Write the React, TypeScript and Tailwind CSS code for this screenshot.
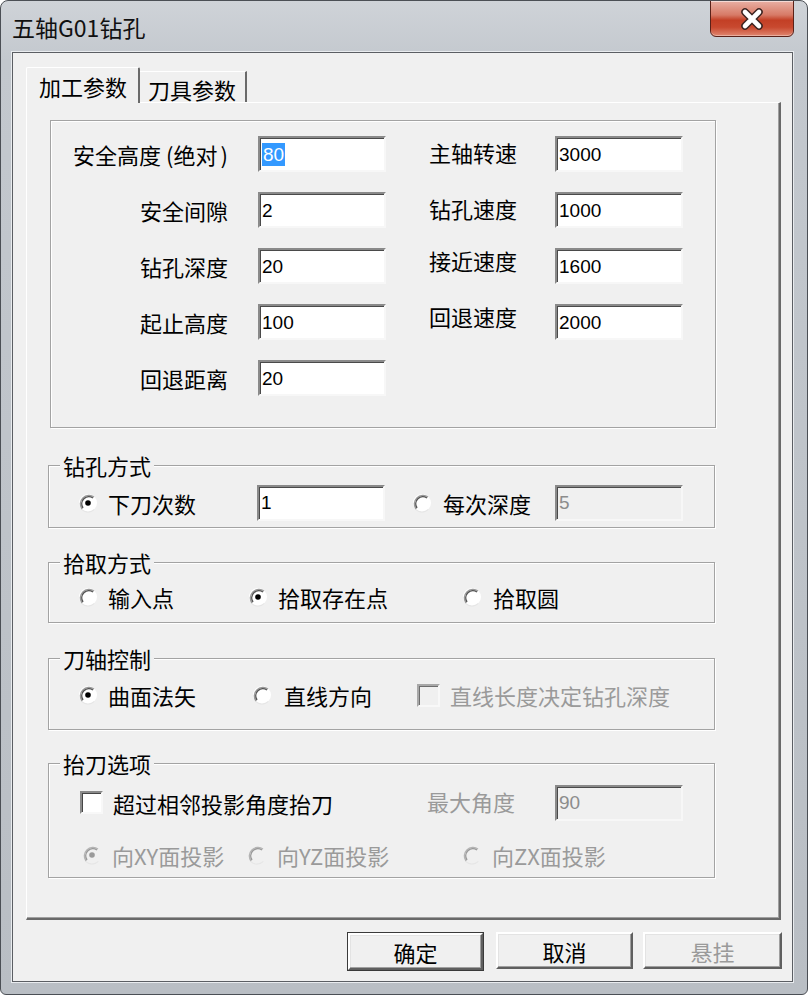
import React from 'react';

const CJK = "font-['Noto_Sans_CJK_SC',sans-serif]";

function Radio({ checked = false, disabled = false }: { checked?: boolean; disabled?: boolean }) {
  return (
    <svg width="20" height="20" viewBox="0 0 20 20" className="shrink-0">
      <circle cx="10" cy="10" r="9" fill={disabled ? '#f0f0f0' : '#ffffff'} />
      <path d="M16.4 16.4 A9 9 0 0 1 3.6 16.4" stroke="#e6e6e6" strokeWidth="1.2" fill="none" />
      <path d="M4 16 A8.6 8.6 0 0 1 16 4" stroke={disabled ? '#b4b4b4' : '#9a9a9a'} strokeWidth="1.4" fill="none" />
      <path d="M5 15 A7.2 7.2 0 0 1 15 5" stroke={disabled ? '#9a9a9a' : '#555555'} strokeWidth="1.4" fill="none" />
      {checked && <circle cx="10" cy="10" r="2.8" fill={disabled ? '#9a9a9a' : '#000000'} />}
    </svg>
  );
}

function Check({ disabled = false }: { disabled?: boolean }) {
  return (
    <div
      className={`w-[23px] h-[23px] shrink-0 border-2 border-r-[#f8f8f8] border-b-[#f8f8f8] ${
        disabled
          ? 'bg-[#f0f0f0] border-t-[#a8a8a8] border-l-[#a8a8a8] shadow-[inset_1px_1px_0_#6e6e6e]'
          : 'bg-white border-t-[#8a8a8a] border-l-[#8a8a8a] shadow-[inset_1px_1px_0_#454545]'
      }`}
    />
  );
}

function Field({ value, disabled = false, selected = false }: { value: string; disabled?: boolean; selected?: boolean }) {
  return (
    <div
      className={`w-[128px] h-[36px] shrink-0 border-2 border-t-[#8a8a8a] border-l-[#8a8a8a] border-r-[#f7f7f7] border-b-[#f7f7f7] shadow-[inset_1px_1px_0_#4a4a4a] flex items-center pl-[2px] text-[19px] leading-none font-['Liberation_Sans',sans-serif] ${
        disabled ? 'bg-[#f0f0f0] text-[#8c8c8c]' : 'bg-white text-black'
      }`}
    >
      {selected ? (
        <span className="bg-[#3399ff] text-white px-[1px] py-[2px]">{value}</span>
      ) : (
        <span>{value}</span>
      )}
    </div>
  );
}

function Group({ title, className, children }: { title?: string; className: string; children: React.ReactNode }) {
  return (
    <div className={`relative shrink-0 border border-[#a3a3a3] shadow-[inset_1px_1px_0_#ffffff,1px_1px_0_#ffffff] ${className}`}>
      {title && (
        <span className="absolute left-[11px] -top-[13px] bg-[#f0f0f0] px-[3px] text-[22px] leading-[24px] text-black">
          {title}
        </span>
      )}
      {children}
    </div>
  );
}

function ParamRow({
  l1,
  v1,
  l2,
  v2,
  sel,
  up,
}: {
  l1: React.ReactNode;
  v1: string;
  l2?: string;
  v2?: string;
  sel?: boolean;
  up?: boolean;
}) {
  return (
    <div className="flex items-center h-[36px]">
      <div className="w-[177px] text-right text-[22px] leading-[24px]">{l1}</div>
      <div className="ml-[30px]">
        <Field value={v1} selected={sel} />
      </div>
      {l2 && (
        <div className={`ml-[43px] w-[126px] text-[22px] leading-[24px] ${up ? '-mt-[12px]' : '-mt-[4px]'}`}>{l2}</div>
      )}
      {v2 && <Field value={v2} />}
    </div>
  );
}

function Btn({ label, disabled = false, className = '' }: { label: string; disabled?: boolean; className?: string }) {
  return (
    <div
      className={`h-[37px] shrink-0 flex items-center justify-center bg-[#f0f0f0] border-2 border-t-white border-l-white border-r-[#5f5f5f] border-b-[#5f5f5f] shadow-[inset_-1px_-1px_0_#a0a0a0,inset_1px_1px_0_#e3e3e3] text-[22px] leading-none ${
        disabled ? 'text-[#9a9a9a]' : 'text-black'
      } ${className}`}
    >
      {label}
    </div>
  );
}

export default function App() {
  return (
    <div className={`${CJK} w-[808px] h-[995px] flex flex-col overflow-hidden rounded-t-[8px] rounded-b-[6px] border border-[#4b4f55] bg-[linear-gradient(180deg,#cfd3d8_0%,#c3c8ce_6%,#b9bec4_100%)] text-black`}>
      {/* Title bar */}
      <div className="h-[51px] shrink-0 flex items-start justify-between">
        <div className="pl-[11px] pt-[12px] text-[23px] leading-[28px] text-[#111]">五轴G01钻孔</div>
        <div className="mr-[13px] -mt-px w-[84px] h-[37px] rounded-b-[6px] border border-[#5a2118] bg-[linear-gradient(180deg,#e9b0a4_0%,#d77a66_40%,#c33f25_55%,#c8492f_75%,#e0866f_100%)] shadow-[inset_0_1px_0_rgba(255,255,255,0.55),inset_0_-1px_0_rgba(255,255,255,0.35)] flex items-center justify-center">
          <svg width="26" height="24" viewBox="0 0 26 24">
            <path d="M6 5 L20 19 M20 5 L6 19" stroke="#3b2320" strokeWidth="7.5" strokeLinecap="round" />
            <path d="M6 5 L20 19 M20 5 L6 19" stroke="#ffffff" strokeWidth="4.6" strokeLinecap="round" />
          </svg>
        </div>
      </div>

      {/* Client area */}
      <div className="flex-1 flex pl-[11px] pr-[14px] pb-[14px]">
        <div className="flex-1 flex flex-col bg-[#f0f0f0] border border-[#5b5e63] shadow-[0_0_0_1px_#e9ecef] pt-[15px] pl-[13px] pr-[11px] pb-[10px]">
          {/* Tabs */}
          <div className="h-[34px] flex items-end text-[22px] leading-[24px] relative z-10">
            <div className="w-[114px] h-[36px] -mb-[1px] bg-[#f0f0f0] border-l border-t border-l-white border-t-white border-r-2 border-r-[#6a6a6a] rounded-t-[2px] pl-[12px] pt-[6px]">
              加工参数
            </div>
            <div className="w-[107px] h-[31px] bg-[#f0f0f0] border-t border-t-white border-r-2 border-r-[#6a6a6a] pl-[8px] pt-[5px]">
              刀具参数
            </div>
          </div>

          {/* Tab page */}
          <div className="h-[818px] shrink-0 flex flex-col bg-[#f0f0f0] border-l border-t border-l-white border-t-white border-r-2 border-b-2 border-r-[#696969] border-b-[#696969] shadow-[inset_-1px_-1px_0_#a0a0a0] pt-[17px] text-[22px] leading-[24px]">
            {/* Parameters */}
            <Group className="ml-[23px] w-[666px] h-[308px] pt-[15px] flex flex-col gap-[20px]">
              <ParamRow
                l1={
                  <>
                    安全高度<span className="ml-[5px]">(</span>绝对<span className="ml-[3px]">)</span>
                  </>
                }
                v1="80"
                sel
                l2="主轴转速"
                v2="3000"
              />
              <ParamRow l1="安全间隙" v1="2" l2="钻孔速度" v2="1000" />
              <ParamRow l1="钻孔深度" v1="20" l2="接近速度" v2="1600" up />
              <ParamRow l1="起止高度" v1="100" l2="回退速度" v2="2000" up />
              <ParamRow l1="回退距离" v1="20" />
            </Group>

            {/* 钻孔方式 */}
            <Group title="钻孔方式" className="mt-[37px] ml-[21px] w-[667px] h-[63px] pt-[19px] pl-[29px]">
              <div className="flex items-center h-[35px]">
                <div className="w-[179px] flex items-center gap-[10px]">
                  <Radio checked />
                  <span>下刀次数</span>
                </div>
                <Field value="1" />
                <div className="ml-[27px] w-[143px] flex items-center gap-[11px]">
                  <Radio />
                  <span>每次深度</span>
                </div>
                <Field value="5" disabled />
              </div>
            </Group>

            {/* 拾取方式 */}
            <Group title="拾取方式" className="mt-[34px] ml-[21px] w-[667px] h-[61px] pt-[22px] pl-[29px]">
              <div className="flex items-center h-[24px]">
                <div className="w-[170px] flex items-center gap-[10px]">
                  <Radio />
                  <span>输入点</span>
                </div>
                <div className="w-[214px] flex items-center gap-[10px]">
                  <Radio checked />
                  <span>拾取存在点</span>
                </div>
                <div className="flex items-center gap-[11px]">
                  <Radio />
                  <span>拾取圆</span>
                </div>
              </div>
            </Group>

            {/* 刀轴控制 */}
            <Group title="刀轴控制" className="mt-[35px] ml-[21px] w-[667px] h-[72px] pt-[24px] pl-[29px]">
              <div className="flex items-center h-[24px]">
                <div className="w-[174px] flex items-center gap-[10px]">
                  <Radio checked />
                  <span>曲面法矢</span>
                </div>
                <div className="w-[165px] flex items-center gap-[12px]">
                  <Radio />
                  <span>直线方向</span>
                </div>
                <div className="flex items-center gap-[10px] text-[#9a9a9a]">
                  <Check disabled />
                  <span>直线长度决定钻孔深度</span>
                </div>
              </div>
            </Group>

            {/* 抬刀选项 */}
            <Group title="抬刀选项" className="mt-[33px] ml-[21px] w-[667px] h-[115px] pt-[21px]">
              <div className="flex items-center h-[35px] pl-[31px]">
                <div className="w-[347px] flex items-center gap-[10px]">
                  <Check />
                  <span>超过相邻投影角度抬刀</span>
                </div>
                <div className="w-[128px] text-[#9a9a9a] -mt-[4px]">最大角度</div>
                <Field value="90" disabled />
              </div>
              <div className="mt-[23px] flex items-center h-[24px] pl-[33px] text-[#9a9a9a]">
                <div className="w-[165px] flex items-center gap-[10px]">
                  <Radio checked disabled />
                  <span>向XY面投影</span>
                </div>
                <div className="w-[215px] flex items-center gap-[10px]">
                  <Radio disabled />
                  <span>向YZ面投影</span>
                </div>
                <div className="flex items-center gap-[10px]">
                  <Radio disabled />
                  <span>向ZX面投影</span>
                </div>
              </div>
            </Group>
          </div>

          {/* Buttons */}
          <div className="mt-[12px] flex justify-end -mr-px">
            <div className="border border-[#3a3a3a]">
              <Btn label="确定" className="w-[135px] h-[35px]" />
            </div>
            <Btn label="取消" className="ml-[12px] w-[137px]" />
            <Btn label="悬挂" disabled className="ml-[10px] w-[139px]" />
          </div>
        </div>
      </div>
    </div>
  );
}
